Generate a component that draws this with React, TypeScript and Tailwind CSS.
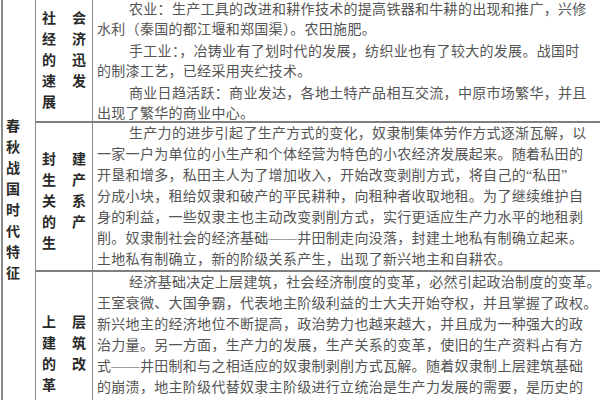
import React from "react";

const font = { fontFamily: '"Liberation Serif", "Noto Sans CJK SC", serif' };

type Para = string[];

const rows: { head: string[][]; paras: Para[]; lead: string; gap: string; headPad: string }[] = [
  {
    head: [["社", "会"], ["经", "济"], ["的", "迅"], ["速", "发"], ["展", ""]],
    lead: "leading-[20px]",
    gap: "mt-[2px]",
    headPad: "items-center",
    paras: [
      [
        "农业：生产工具的改进和耕作技术的提高铁器和牛耕的出现和推广，兴修",
        "水利（秦国的都江堰和郑国渠）。农田施肥。",
      ],
      [
        "手工业：，冶铸业有了划时代的发展，纺织业也有了较大的发展。战国时",
        "的制漆工艺，已经采用夹纻技术。",
      ],
      [
        "商业日趋活跃：商业发达，各地土特产品相互交流，中原市场繁华，并且",
        "出现了繁华的商业中心。",
      ],
    ],
  },
  {
    head: [["封", "建"], ["生", "产"], ["关", "系"], ["的", "产"], ["生", ""]],
    lead: "leading-[21px]",
    gap: "",
    headPad: "items-center pt-[9px]",
    paras: [
      [
        "生产力的进步引起了生产方式的变化，奴隶制集体劳作方式逐渐瓦解，以",
        "一家一户为单位的小生产和个体经营为特色的小农经济发展起来。随着私田的",
        "开垦和增多，私田主人为了增加收入，开始改变剥削方式，将自己的“私田”",
        "分成小块，租给奴隶和破产的平民耕种，向租种者收取地租。为了继续维护自",
        "身的利益，一些奴隶主也主动改变剥削方式，实行更适应生产力水平的地租剥",
        "削。奴隶制社会的经济基础——井田制走向没落，封建土地私有制确立起来。",
        "土地私有制确立，新的阶级关系产生，出现了新兴地主和自耕农。",
      ],
    ],
  },
  {
    head: [["上", "层"], ["建", "筑"], ["的", "改"], ["革", ""]],
    lead: "leading-[21px]",
    gap: "",
    headPad: "items-start pt-[40px]",
    paras: [
      [
        "经济基础决定上层建筑，社会经济制度的变革，必然引起政治制度的变革。",
        "王室衰微、大国争霸，代表地主阶级利益的士大夫开始夺权，并且掌握了政权。",
        "新兴地主的经济地位不断提高，政治势力也越来越大，并且成为一种强大的政",
        "治力量。另一方面，生产力的发展，生产关系的变革，使旧的生产资料占有方",
        "式——井田制和与之相适应的奴隶制剥削方式瓦解。随着奴隶制上层建筑基础",
        "的崩溃，地主阶级代替奴隶主阶级进行立统治是生产力发展的需要，是历史的",
      ],
    ],
  },
];

const heights = ["h-[123px] border-b-2", "h-[149px] border-b-2", "flex-1"];

export default function App() {
  return (
    <div
      className="w-[600px] h-[400px] bg-white overflow-hidden flex pl-[1px] pr-[2px]"
      style={font}
    >
      {/* left title column */}
      <div className="w-[35px] shrink-0 border-l-2 border-r border-[#8a8a8a] flex flex-col justify-center pl-[3px] text-[14px] font-bold leading-[21px] text-[#2a2a2a]">
        {"春秋战国时代特征".split("").map((c, i) => (
          <span key={i}>{c}</span>
        ))}
      </div>

      <div className="flex-1 flex flex-col border-r-2 border-[#8a8a8a]">
        {rows.map((row, r) => (
          <div key={r} className={`flex border-[#808080] overflow-hidden ${heights[r]}`}>
            <div className={`w-[57px] shrink-0 border-r border-[#8a8a8a] flex justify-center ${row.headPad}`}>
              <div className="grid grid-cols-2 gap-x-[16px] text-[14px] font-bold leading-[21px] text-[#2a2a2a]">
                {row.head.flat().map((c, i) => (
                  <span key={i} className="w-[14px]">
                    {c}
                  </span>
                ))}
              </div>
            </div>
            <div className={`flex-1 min-w-0 overflow-hidden pl-[4px] text-[14px] tracking-[0.3px] text-[#555] ${row.lead}`}>
              {row.paras.map((p, pi) => (
                <div key={pi} className={pi > 0 ? row.gap : ""}>
                  {p.map((line, li) => (
                    <div key={li} className={`whitespace-nowrap ${li === 0 ? "pl-[32px]" : ""}`}>
                      {line}
                    </div>
                  ))}
                </div>
              ))}
            </div>
          </div>
        ))}
      </div>
    </div>
  );
}
